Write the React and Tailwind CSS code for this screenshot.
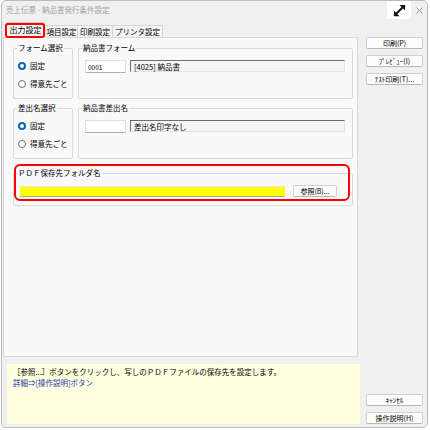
import React from "react";

function Radio({ checked, label }) {
  return (
    <div className="flex items-center h-[12px] gap-[4px]">
      {checked ? (
        <span className="w-[8px] h-[8px] rounded-full bg-[#0067c0] flex items-center justify-center shrink-0">
          <span className="w-[4px] h-[4px] rounded-full bg-white" />
        </span>
      ) : (
        <span className="w-[8px] h-[8px] rounded-full border border-[#6f6f6f] bg-white shrink-0" />
      )}
      <span className="leading-[12px] whitespace-nowrap">{label}</span>
    </div>
  );
}

function Btn({ children, className = "" }) {
  return (
    <div
      className={
        "h-[12px] bg-[#fdfdfd] border border-[#d0d0d0] border-b-[#b8b8b8] rounded-[2px] flex items-center justify-center text-[7px] leading-none whitespace-nowrap " +
        className
      }
    >
      {children}
    </div>
  );
}

function Group({ title, className = "", children }) {
  return (
    <fieldset className={"border border-[#dadada] rounded-[2px] " + className}>
      <legend className="ml-[3px] px-[1px] leading-[12px] whitespace-nowrap">{title}</legend>
      {children}
    </fieldset>
  );
}

function FormRow({ code, name }) {
  return (
    <div className="flex items-start gap-[4px] pt-[6px] pl-[6px]">
      <div className="w-[41px] h-[13px] bg-white border border-[#dedede] border-b-[#b0b0b0] pl-[2px] text-[6.5px] leading-[12px]">
        {code}
      </div>
      <div className="w-[215px] h-[12px] bg-[#f6f6f6] border border-[#e4e4e4] border-t-[#6e6e6e] border-l-[#6e6e6e] pl-[3px] leading-[11px] whitespace-nowrap">
        {name}
      </div>
    </div>
  );
}

export default function App() {
  return (
    <div className="w-[430px] h-[430px] bg-white font-['Noto_Sans_CJK_JP',sans-serif] text-[7.5px] text-black">
      <div className="ml-[1px] w-[427px] h-[428px] border border-[#bcbcbc] rounded-[5px] bg-[#f0f0f0] flex flex-col overflow-hidden">
        {/* Title bar */}
        <div className="h-[20px] flex items-start shrink-0">
          <div className="pl-[4px] pt-[4px] leading-[10px] text-[#a0a0a0] whitespace-nowrap">
            売上伝票 - 納品書発行条件設定
          </div>
          <div className="ml-auto w-[24px] h-[18px] bg-white flex items-center justify-center">
            <svg width="15" height="15" viewBox="0 0 16 16">
              <line x1="4" y1="12" x2="12" y2="4" stroke="#111" strokeWidth="2" />
              <polygon points="14,2 14,8 8,2" fill="#111" />
              <polygon points="2,14 2,8 8,14" fill="#111" />
            </svg>
          </div>
          <div className="w-[16px] h-[18px] flex items-center justify-center">
            <svg width="7" height="7" viewBox="0 0 7 7">
              <line x1="0.5" y1="0.5" x2="6.5" y2="6.5" stroke="#9a9a9a" strokeWidth="1" />
              <line x1="6.5" y1="0.5" x2="0.5" y2="6.5" stroke="#9a9a9a" strokeWidth="1" />
            </svg>
          </div>
        </div>

        {/* Body */}
        <div className="flex flex-1 min-h-0">
          {/* Left column */}
          <div className="w-[358px] ml-[1px] flex flex-col">
            {/* Tabs */}
            <div className="h-[15px] mt-[1px] flex items-end pl-[3px] relative z-10">
              <div className="relative h-[15px] w-[39px] bg-[#fafafa] border-x border-t border-[#d0d0d0] flex items-center justify-center text-[8px] leading-none">
                出力設定
                <div className="absolute left-[-2px] right-[-1px] top-[0px] bottom-[-1px] border-2 border-[#ff0000] rounded-[3px]" />
              </div>
              <div className="h-[12px] w-[33px] bg-[#f4f4f4] border border-b-0 border-[#d6d6d6] flex items-center justify-center leading-none">
                項目設定
              </div>
              <div className="h-[12px] w-[35px] bg-[#f4f4f4] border border-b-0 border-l-0 border-[#d6d6d6] flex items-center justify-center leading-none">
                印刷設定
              </div>
              <div className="h-[12px] w-[50px] bg-[#f4f4f4] border border-b-0 border-l-0 border-[#d6d6d6] flex items-center justify-center leading-none">
                プリンタ設定
              </div>
            </div>

            {/* Panel */}
            <div className="h-[320px] w-[355px] bg-[#f9f9f9] border border-[#d9d9d9] pl-[9px] pt-[4px]">
              <div className="flex gap-[5px]">
                <Group title="フォーム選択" className="w-[60px] h-[57px]">
                  <div className="flex flex-col gap-[6px] pt-[6px] pl-[4px]">
                    <Radio checked label="固定" />
                    <Radio label="得意先ごと" />
                  </div>
                </Group>
                <Group title="納品書フォーム" className="w-[275px] h-[57px]">
                  <FormRow code="0001" name="[4025] 納品書" />
                </Group>
              </div>

              <div className="flex gap-[5px] mt-[3px]">
                <Group title="差出名選択" className="w-[60px] h-[57px]">
                  <div className="flex flex-col gap-[6px] pt-[6px] pl-[4px]">
                    <Radio checked label="固定" />
                    <Radio label="得意先ごと" />
                  </div>
                </Group>
                <Group title="納品書差出名" className="w-[275px] h-[57px]">
                  <FormRow code="" name="差出名印字なし" />
                </Group>
              </div>

              <div className="relative mt-[8px] w-[340px]">
                <Group title="ＰＤＦ保存先フォルダ名" className="w-[340px] h-[39px]">
                  <div className="flex items-center gap-[8px] pt-[6px] pl-[6px]">
                    <div className="w-[265px] h-[11px] bg-[#ffff00] border-t border-t-[#e6e6e6] border-b border-b-[#a8a8a8]" />
                    <Btn className="w-[44px]">参照(B)...</Btn>
                  </div>
                </Group>
                <div className="absolute left-[1px] top-[-3px] w-[336px] h-[37px] border-2 border-[#ff0000] rounded-[6px]" />
              </div>
            </div>

            {/* Help */}
            <div className="mt-[7px] ml-[4px] w-[353px] h-[60px] bg-[#ffffe1] pl-[6px] pt-[2px] leading-[11px] whitespace-nowrap">
              <div>［参照...］ボタンをクリックし、写しのＰＤＦファイルの保存先を設定します。</div>
              <div className="text-[#2233a8]">詳細⇒[操作説明]ボタン</div>
            </div>
          </div>

          {/* Right column */}
          <div className="w-[57px] ml-[5px] flex flex-col pt-[16px] pb-[3px] gap-[6px]">
            <Btn>印刷(P)</Btn>
            <Btn>ﾌﾟﾚﾋﾞｭｰ(I)</Btn>
            <Btn>ﾃｽﾄ印刷(T)...</Btn>
            <div className="mt-auto" />
            <Btn>ｷｬﾝｾﾙ</Btn>
            <Btn>操作説明(H)</Btn>
          </div>
        </div>
      </div>
    </div>
  );
}
